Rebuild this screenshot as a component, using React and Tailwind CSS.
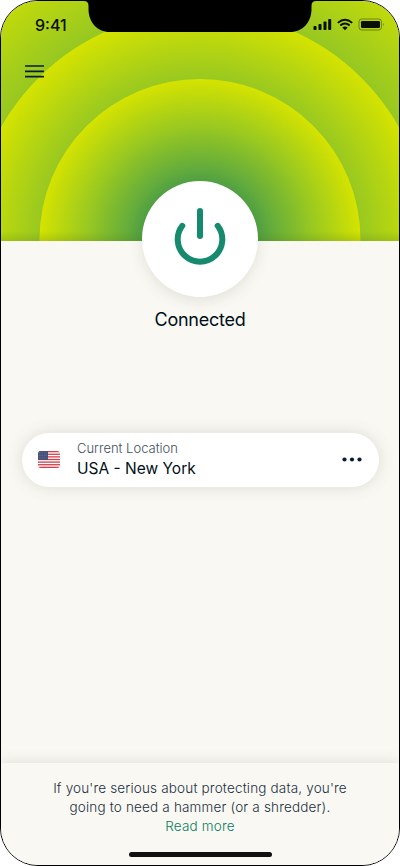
import React from 'react';

const Rings = () => (
    <svg className="absolute inset-0 h-full w-full" viewBox="0 0 398 240" fill="none">
        <defs>
            <radialGradient id="ring">
                <stop offset="0" stopColor="#0f866c" />
                <stop offset="0.37" stopColor="#53a344" />
                <stop offset="0.7" stopColor="#98c821" />
                <stop offset="1" stopColor="#d5e300" />
            </radialGradient>
            <linearGradient id="edge" x1="0" y1="0" x2="0" y2="1">
                <stop offset="0" stopColor="#4f7a10" stopOpacity="0" />
                <stop offset="1" stopColor="#4f7a10" stopOpacity="0.22" />
            </linearGradient>
        </defs>
        <circle cx="199" cy="238.500" r="330" fill="url(#ring)" />
        <circle cx="199" cy="238.500" r="228.500" fill="url(#ring)" />
        <circle cx="199" cy="238.500" r="160.500" fill="url(#ring)" />
        <rect y="230" width="398" height="10" fill="url(#edge)" />
    </svg>
);

const Notch = () => (
    <svg className="absolute left-[83px] top-0 h-[31px] w-[232px]" viewBox="0 0 232 31">
        <path d="M0 0C3 0 4.500 1.500 4.500 5V8C4.500 21 13 31 26 31H206C219 31 227.500 21 227.500 8V5C227.500 1.500 229 0 232 0Z" fill="#000" />
    </svg>
);

const StatusIcons = () => (
    <svg className="mt-[3px] h-[14px] w-[72px]" viewBox="0 0 72 14" fill="none">
        <g fill="#0a0f04">
            <rect x="0.500" y="8" width="3" height="4" rx="0.800" />
            <rect x="5.500" y="6" width="3" height="6" rx="0.800" />
            <rect x="10.500" y="3.500" width="3" height="8.500" rx="0.800" />
            <rect x="15.200" y="1" width="3" height="11" rx="0.800" />
            <path d="M32 12.200L29.300 9.500Q32 7.300 34.700 9.500Z" />
            <rect x="48" y="3" width="19" height="7" rx="1.200" />
        </g>
        <g stroke="#0a0f04" strokeWidth="1.900">
            <path d="M24.800 4.900Q32 -1.500 39.200 4.900" />
            <path d="M27.300 7.500Q32 3.300 36.700 7.500" />
        </g>
        <rect x="46" y="1" width="22.500" height="11" rx="2.800" stroke="#0a0f04" strokeOpacity="0.4" />
        <path d="M70 4.700Q71.500 6.500 70 8.300Z" fill="#0a0f04" fillOpacity="0.45" />
    </svg>
);

const PowerIcon = () => (
    <svg className="h-[60px] w-[52px]" viewBox="0 0 52 60" fill="none" stroke="#168a6e" strokeWidth="6" strokeLinecap="round">
        <path d="M26 5V30" />
        <path d="M8.300 19.800A22.300 22.300 0 1 0 43.700 19.800" />
    </svg>
);

const Flag = () => (
    <svg className="h-[17px] w-[22px]" viewBox="0 0 22 17">
        <defs>
            <clipPath id="flag"><rect width="22" height="17" rx="3" /></clipPath>
        </defs>
        <g clipPath="url(#flag)">
            <rect width="22" height="17" fill="#fff" />
            {[0, 1, 2, 3, 4, 5, 6].map((i) => (
                <rect key={i} y={i * 2.615} width="22" height="1.308" fill="#d0404b" />
            ))}
            <rect width="10" height="9" fill="#46527a" />
            {[1.8, 4.4, 7].map((y) => (
                <path key={y} d={`M1 ${y}H9.500`} stroke="#8790aa" strokeWidth="0.600" strokeDasharray="0.700 1" />
            ))}
        </g>
    </svg>
);

const LocationCard = () => (
    <button className="mx-[20.5px] mt-[100px] flex h-[53.5px] shrink-0 items-center rounded-full bg-white px-[16.5px] text-left shadow-[0_0_16px_rgba(80,80,50,0.17)]">
        <Flag />
        <div className="-mt-px ml-[17px] flex-1">
            <div className="text-[13px] font-light leading-[19px] text-[#3f4e5c]">Current Location</div>
            <div className="text-[15.5px] leading-[21px] text-[#001018]">USA - New York</div>
        </div>
        <svg className="h-[5px] w-5" viewBox="0 0 20 5" fill="#0b1c36">
            <circle cx="2.500" cy="2.500" r="2.100" />
            <circle cx="10" cy="2.500" r="2.100" />
            <circle cx="17.500" cy="2.500" r="2.100" />
        </svg>
    </button>
);

const App = () => (
    <div className="h-[866px] w-[400px] bg-white font-['Inter',sans-serif]">
        <div className="relative flex h-full flex-col overflow-hidden rounded-[38px] border border-black bg-[#f9f8f3]">
            <header className="relative h-[240px] shrink-0">
                <Rings />
                <Notch />
                <div className="relative flex justify-between pl-[34px] pr-[14px] pt-[14px]">
                    <span className="text-[16px] font-medium leading-5 text-[#0a0f04]">9:41</span>
                    <StatusIcons />
                </div>
                <svg className="relative ml-6 mt-[29px] h-[14px] w-[19px]" viewBox="0 0 19 14" stroke="#0b1c36" strokeWidth="1.700">
                    <path d="M0 2H19M0 7.300H19M0 12.600H19" />
                </svg>
            </header>

            <main className="relative flex flex-1 flex-col">
                <button className="-mt-[60px] flex h-[116px] w-[116px] shrink-0 items-center justify-center self-center rounded-full bg-white pb-[6px] shadow-[0_4px_14px_rgba(80,80,50,0.13)]">
                    <PowerIcon />
                </button>
                <div className="mt-[10px] text-center text-[18px] leading-[26px] tracking-[-0.25px] text-[#001018]">Connected</div>
                <LocationCard />
            </main>

            <footer className="relative flex h-[102px] shrink-0 flex-col items-center bg-[#f9f8f3] pt-[16px] text-center text-[13.5px] font-light leading-[19px] tracking-[0.17px] text-[#1c3042] shadow-[0_-1px_12px_rgba(80,80,50,0.15)]">
                <p>
                    If you're serious about protecting data, you're
                    <br />
                    going to need a hammer (or a shredder).
                </p>
                <a className="text-[#0a7d60]">Read more</a>
                <div className="mt-4 h-[5px] w-[143px] rounded-full bg-[#111]" />
            </footer>
        </div>
    </div>
);

export default App;
